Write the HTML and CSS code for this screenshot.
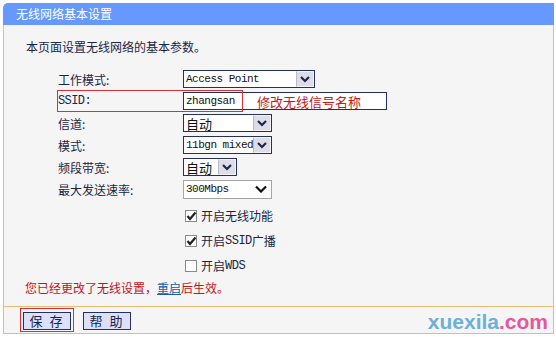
FILE: index.html
```html
<!DOCTYPE html>
<html>
<head>
    <title>无线网络基本设置</title>
    <link rel="stylesheet" href="styles.css">
</head>
<body>

    <div class="panel">
        <div class="title">无线网络基本设置</div>
        <div class="content">
            <p class="intro">本页面设置无线网络的基本参数。</p>

            <div class="form">
                <div class="row">
                    <span class="label">工作模式:</span>
                    <div class="select w-mode">
                        <span class="value mono">Access Point</span>
                        <span class="arrow"><svg width="12" height="8" viewBox="0 0 12 8"><path d="M2 2 L6 6 L10 2" fill="none" stroke="#1b2650" stroke-width="2.2"/></svg></span>
                    </div>
                </div>
                <div class="row ssid">
                    <span class="label mono">SSID:</span>
                    <div class="input">
                        <span class="value mono">zhangsan</span>
                        <span class="note">修改无线信号名称</span>
                    </div>
                    <div class="mark"></div>
                </div>
                <div class="row">
                    <span class="label">信道:</span>
                    <div class="select w-mid">
                        <span class="value cn">自动</span>
                        <span class="arrow"><svg width="12" height="8" viewBox="0 0 12 8"><path d="M2 2 L6 6 L10 2" fill="none" stroke="#1b2650" stroke-width="2.2"/></svg></span>
                    </div>
                </div>
                <div class="row">
                    <span class="label">模式:</span>
                    <div class="select w-mid">
                        <span class="value mono">11bgn mixed</span>
                        <span class="arrow"><svg width="12" height="8" viewBox="0 0 12 8"><path d="M2 2 L6 6 L10 2" fill="none" stroke="#1b2650" stroke-width="2.2"/></svg></span>
                    </div>
                </div>
                <div class="row">
                    <span class="label">频段带宽:</span>
                    <div class="select w-small">
                        <span class="value cn">自动</span>
                        <span class="arrow"><svg width="12" height="8" viewBox="0 0 12 8"><path d="M2 2 L6 6 L10 2" fill="none" stroke="#1b2650" stroke-width="2.2"/></svg></span>
                    </div>
                </div>
                <div class="row">
                    <span class="label">最大发送速率:</span>
                    <div class="select flat w-mid">
                        <span class="value mono">300Mbps</span>
                        <span class="arrow"><svg width="12" height="8" viewBox="0 0 12 8"><path d="M1 1.5 L6 6.5 L11 1.5" fill="none" stroke="#111" stroke-width="2.2"/></svg></span>
                    </div>
                </div>
            </div>

            <div class="checks">
                <label class="check"><span class="box"><svg width="12" height="12" viewBox="0 0 12 12"><path d="M2.5 6 L5 9 L10.5 2.5" fill="none" stroke="#222" stroke-width="2.2"/></svg></span>开启无线功能</label>
                <label class="check"><span class="box"><svg width="12" height="12" viewBox="0 0 12 12"><path d="M2.5 6 L5 9 L10.5 2.5" fill="none" stroke="#222" stroke-width="2.2"/></svg></span>开启<span class="mono">SSID</span>广播</label>
                <label class="check"><span class="box"></span>开启<span class="mono">WDS</span></label>
            </div>

            <p class="notice">您已经更改了无线设置，<a href="#">重启</a>后生效。</p>
        </div>

        <div class="footer">
            <div class="save-wrap">
                <button class="btn">保 存</button>
                <div class="mark"></div>
            </div>
            <button class="btn">帮 助</button>
        </div>
    </div>

    <div class="watermark">xuexila<span class="dotcom">.com</span></div>

</body>
</html>
```

FILE: styles.css
```css
body {
    margin: 0;
    font-family: 'Noto Sans CJK SC', sans-serif;
    font-size: 12px;
    color: #1b2646;
    background-color: #ffffff;
    position: relative;
    width: 556px;
    height: 337px;
    overflow: hidden;
}

.mono {
    font-family: 'Liberation Mono', 'DejaVu Sans Mono', monospace;
    font-size: 11px;
    letter-spacing: -0.5px;
    white-space: nowrap;
}

.panel {
    margin: 3px 0 0 3px;
    width: 551px;
}

.title {
    height: 22px;
    line-height: 21px;
    padding-left: 13px;
    background-color: #6698fe;
    color: #ffffff;
    font-size: 12px;
    border-radius: 5px 0 0 0;
}

.content {
    background-color: #f5f5f5;
    border-left: 1px solid #e9bc72;
    border-right: 1px solid #e9bc72;
    border-bottom: 1px solid #e9bc72;
    padding-bottom: 10px;
}

.intro {
    margin: 0;
    padding: 14px 0 0 22px;
    line-height: 16px;
}

.form {
    margin: 13px 0 0 54px;
}

.row {
    display: flex;
    align-items: center;
    height: 22px;
    position: relative;
}

.label {
    width: 125px;
    flex-shrink: 0;
}

.label.mono {
    font-size: 12px;
    letter-spacing: -0.6px;
}

.select {
    display: flex;
    align-items: stretch;
    height: 18px;
    box-sizing: border-box;
    border: 1px solid #24305e;
    background-color: #ffffff;
}

.select .value {
    flex: 1;
    white-space: nowrap;
    display: flex;
    align-items: center;
    padding-left: 2px;
    color: #111;
}

.select .cn {
    font-size: 13px;
}

.select .arrow {
    width: 18px;
    flex-shrink: 0;
    display: flex;
    align-items: center;
    justify-content: center;
    background-color: #dcdde6;
    border: 1px solid #f4f4f8;
    border-left-color: #b8bac8;
    box-sizing: border-box;
}

.select.flat {
    height: 19px;
    border-color: #a5a5a5;
}

.select.flat .arrow {
    background: none;
    border: none;
    width: 20px;
}

.w-mode {
    width: 132px;
}

.w-mid {
    width: 89px;
}

.w-small {
    width: 54px;
}

.input {
    width: 204px;
    height: 18px;
    box-sizing: border-box;
    border: 1px solid #24305e;
    background-color: #ffffff;
    display: flex;
    align-items: center;
}

.input .value {
    width: 60px;
    padding-left: 2px;
    color: #111;
}

.input .note {
    margin-left: 11px;
    color: #c81818;
    font-size: 13px;
}

.ssid .mark {
    position: absolute;
    left: -1px;
    top: 0;
    width: 186px;
    height: 22px;
    box-sizing: border-box;
    border: 1px solid #d9303a;
}

.checks {
    margin: 3px 0 0 181px;
}

.check {
    display: flex;
    align-items: center;
    height: 25px;
    color: #1b2646;
}

.check .mono {
    font-size: 12px;
}

.check .box {
    width: 12px;
    height: 12px;
    box-sizing: border-box;
    border: 1px solid #8a8a8a;
    background-color: #ffffff;
    margin-right: 4px;
    display: flex;
}

.check .box svg {
    margin: -1px;
}

.notice {
    margin: 2px 0 0 21px;
    line-height: 16px;
    color: #c4141c;
}

.notice a {
    color: #1a5ca6;
}

.footer {
    display: flex;
    gap: 12px;
    padding: 5px 0 2px 19px;
    height: 19px;
    background-color: #f5f5f5;
    border-left: 1px solid #e9bc72;
    border-right: 1px solid #e9bc72;
    border-bottom: 1px solid #e9bc72;
}

.save-wrap {
    position: relative;
}

.save-wrap .mark {
    position: absolute;
    left: -3px;
    top: -4px;
    width: 54px;
    height: 24px;
    box-sizing: border-box;
    border: 1px solid #d9303a;
}

.btn {
    width: 48px;
    height: 18px;
    padding: 0;
    border: 1px solid #24305e;
    background-color: #dde0fa;
    font-family: 'Noto Sans CJK SC', sans-serif;
    font-size: 13px;
    line-height: 16px;
    letter-spacing: 2px;
    color: #1b2646;
}

.watermark {
    position: absolute;
    right: 8px;
    bottom: 3px;
    font-family: 'Liberation Sans', Arial, sans-serif;
    font-weight: bold;
    font-size: 21px;
    color: #6cb1d6;
}

.watermark .dotcom {
    color: #e4589c;
}
```
